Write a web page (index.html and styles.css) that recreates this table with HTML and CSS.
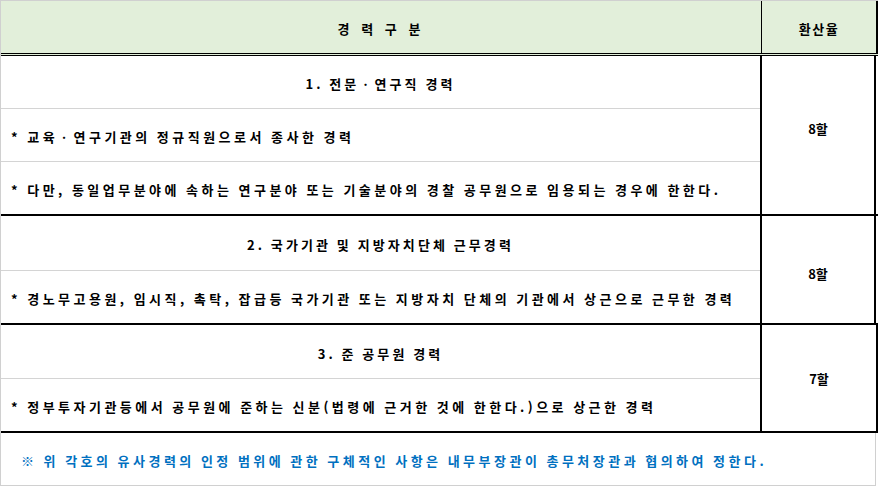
FILE: index.html
```html
<!DOCTYPE html>
<html lang="ko">
<head>
<meta charset="utf-8">
<link rel="stylesheet" href="styles.css">
</head>
<body>
<div class="sheet">
  <div class="head">
    <div class="hcell hmain">경 력 구 분</div>
    <div class="hcell hrate">환산율</div>
  </div>

  <div class="group g1">
    <div class="left">
      <div class="row title">1. 전문ㆍ연구직 경력</div>
      <div class="row item">* 교육ㆍ연구기관의 정규직원으로서 종사한 경력</div>
      <div class="row item">* 다만, 동일업무분야에 속하는 연구분야 또는 기술분야의 경찰 공무원으로 임용되는 경우에 한한다.</div>
    </div>
    <div class="rate rate-high">8할</div>
  </div>

  <div class="group g2">
    <div class="left">
      <div class="row title">2. 국가기관 및 지방자치단체 근무경력</div>
      <div class="row item">* 경노무고용원, 임시직, 촉탁, 잡급등 국가기관 또는 지방자치 단체의 기관에서 상근으로 근무한 경력</div>
    </div>
    <div class="rate rate-low">8할</div>
  </div>

  <div class="group g3">
    <div class="left">
      <div class="row title">3. 준 공무원 경력</div>
      <div class="row item">* 정부투자기관등에서 공무원에 준하는 신분(법령에 근거한 것에 한한다.)으로 상근한 경력</div>
    </div>
    <div class="rate">7할</div>
  </div>

  <div class="note">※ 위 각호의 유사경력의 인정 범위에 관한 구체적인 사항은 내무부장관이 총무처장관과 협의하여 정한다.</div>
</div>
</body>
</html>
```

FILE: styles.css
```css
html, body {
  margin: 0;
  padding: 0;
  background: #ffffff;
}

body {
  font-family: "Noto Sans CJK KR", "Noto Sans", "DejaVu Sans", sans-serif;
  font-size: 13px;
  font-weight: 700;
  color: #000000;
  letter-spacing: 3.48px;
  word-spacing: -1px;
}

.sheet {
  width: 877px;
  border-top: 1px solid #d0d0d0;
  border-left: 1px solid #d0d0d0;
}

.head {
  display: flex;
  height: 52px;
  background: #e2efda;
  border-bottom: 3px double #000000;
}

.hcell {
  display: flex;
  align-items: center;
  justify-content: center;
  padding-top: 3px;
  box-sizing: border-box;
}

.hmain {
  width: 760px;
  letter-spacing: 4px;
  word-spacing: 0;
}

.hrate {
  width: 114px;
  border-left: 1px solid #000000;
  border-right: 2px solid #000000;
  box-sizing: content-box;
  letter-spacing: 1.5px;
}

.group {
  display: flex;
  border-bottom: 2px solid #000000;
}

.left {
  width: 759px;
  border-right: 2px solid #000000;
  display: flex;
  flex-direction: column;
}

.row {
  height: 53px;
  display: flex;
  align-items: center;
  border-bottom: 1px solid #d4d4d4;
  padding-top: 3px;
  box-sizing: border-box;
  white-space: nowrap;
}

.row:last-child {
  border-bottom: none;
  height: 52px;
}

.g2 .row:first-child {
  height: 55px;
}

.g3 .row:first-child {
  height: 54px;
}

.title {
  justify-content: center;
  letter-spacing: 3.1px;
}

.item {
  padding-left: 10px;
}

.rate {
  width: 114px;
  border-right: 2px solid #000000;
  display: flex;
  align-items: center;
  justify-content: center;
  letter-spacing: 0;
}

.rate-high {
  padding-bottom: 14px;
  box-sizing: border-box;
}

.rate-low {
  padding-top: 8px;
  box-sizing: border-box;
}

.note {
  width: 875px;
  height: 53px;
  border-right: 1px solid #d0d0d0;
  border-bottom: 1px solid #d0d0d0;
  display: flex;
  align-items: center;
  padding-left: 20px;
  padding-top: 3px;
  box-sizing: border-box;
  color: #0070c0;
  white-space: nowrap;
}
```
